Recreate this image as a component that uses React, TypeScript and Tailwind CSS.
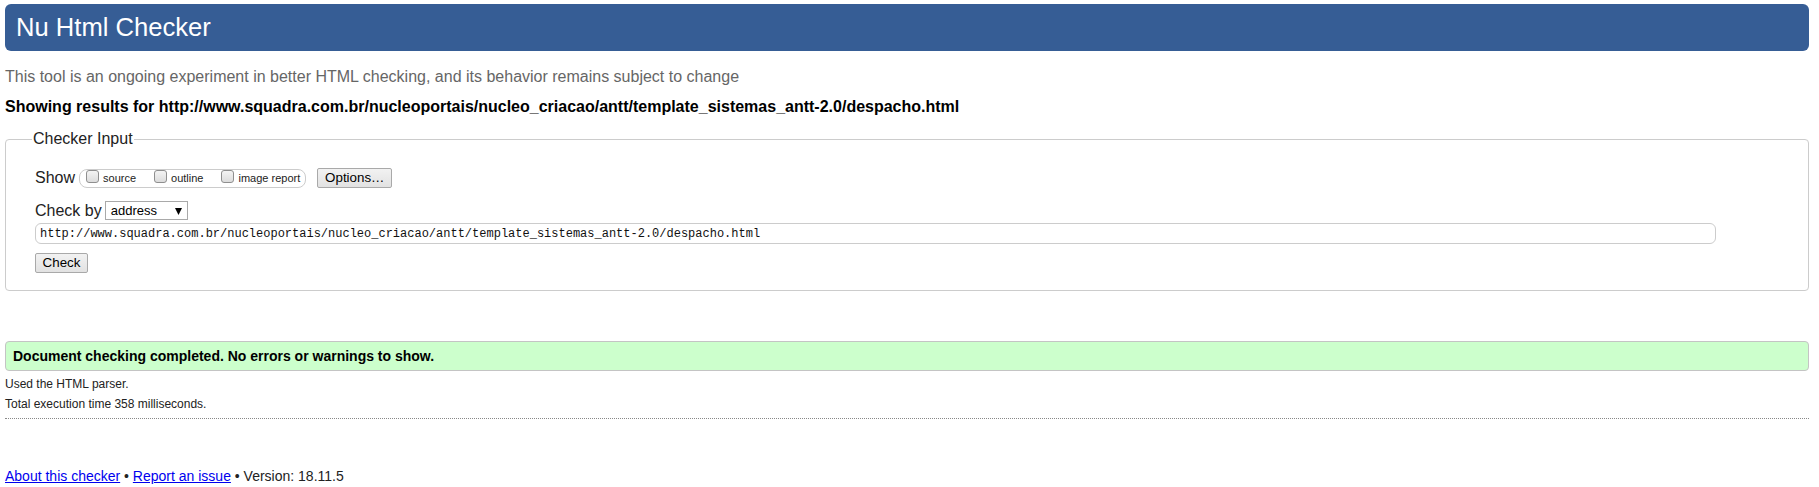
import React from "react";

function Box() {
  return (
    <span className="inline-block w-[13px] h-[13px] rounded-[3px] border border-[#8f8f8f] bg-gradient-to-b from-[#f4f4f4] to-[#dcdcdc] mr-[4px] -translate-y-[2px]" />
  );
}

export default function App() {
  return (
    <div className="pl-[5px] pr-[10px] pt-[4px] pb-[4px] font-['Liberation_Sans',Arial,sans-serif] text-[#222] bg-white min-h-[487px]">
      <h1 className="h-[47px] bg-[#365d95] rounded-[6px] text-white text-[25.6px] leading-none pl-[11px] flex items-center">
        Nu Html Checker
      </h1>
      <p className="mt-[17px] text-[16px] leading-[18px] text-[#666]">
        This tool is an ongoing experiment in better HTML checking, and its behavior remains subject to change
      </p>
      <p className="mt-[12px] text-[16px] leading-[18px] font-bold text-black">
        Showing results for http://www.squadra.com.br/nucleoportais/nucleo_criacao/antt/template_sistemas_antt-2.0/despacho.html
      </p>
      <fieldset className="mt-[14px] border border-[#ccc] rounded-[4px] pl-[29px] pr-[10px] pt-[20px] pb-[17px]">
        <legend className="text-[16px] leading-[18px] px-[1px] -ml-[3px]">Checker Input</legend>
        <div className="flex items-center h-[20px]">
          <span className="text-[16px] leading-[18px] mr-[4px]">Show</span>
          <div className="flex items-center h-[19px] border border-[#ccc] rounded-[8px] pl-[6px] pr-[5px] text-[11px] leading-[13px]">
            <Box />
            <span>source</span>
            <span className="w-[18px]" />
            <Box />
            <span>outline</span>
            <span className="w-[18px]" />
            <Box />
            <span>image report</span>
          </div>
          <button className="ml-[11px] w-[75px] h-[20px] border border-[#a9a9a9] rounded-[2px] bg-gradient-to-b from-[#f2f2f2] to-[#e2e2e2] text-[13.33px] leading-[16px] text-black flex items-center justify-center">
            Options…
          </button>
        </div>
        <div className="flex items-center mt-[13px] h-[19px]">
          <span className="text-[16px] leading-[18px] mr-[3px]">Check by</span>
          <div className="relative w-[83px] h-[19px] border border-[#a9a9a9] bg-white text-[13px] leading-[17px] text-black pl-[5px]">
            address
            <svg className="absolute right-[5px] top-[6px]" width="7" height="7" viewBox="0 0 7 7">
              <path d="M0 0 H7 L3.5 7 Z" fill="#000" />
            </svg>
          </div>
        </div>
        <div className="mt-[3px] w-[1681px] h-[21px] border border-[#ccc] rounded-[6px] pl-[4px] flex items-center font-['Liberation_Mono',monospace] text-[12px] text-[#111]">
          http://www.squadra.com.br/nucleoportais/nucleo_criacao/antt/template_sistemas_antt-2.0/despacho.html
        </div>
        <button className="mt-[9px] w-[53px] h-[20px] border border-[#a9a9a9] rounded-[2px] bg-gradient-to-b from-[#f2f2f2] to-[#e2e2e2] text-[13.33px] leading-[16px] text-black flex items-center justify-center">
          Check
        </button>
      </fieldset>
      <div className="mt-[50px] border border-[#c4c4c4] rounded-[4px] bg-[#ccffcc] px-[7px] py-[6px] text-[14px] leading-[16px] font-bold text-black">
        Document checking completed. No errors or warnings to show.
      </div>
      <p className="mt-[6px] text-[12px] leading-[14px]">Used the HTML parser.</p>
      <p className="mt-[6px] text-[12px] leading-[14px]">Total execution time 358 milliseconds.</p>
      <div className="mt-[7px] border-t border-dotted border-[#888]" />
      <p className="mt-[49px] text-[14px] leading-[16px]">
        <a href="#" className="text-[#0000ee] underline">About this checker</a>
        {" • "}
        <a href="#" className="text-[#0000ee] underline">Report an issue</a>
        {" • Version: 18.11.5"}
      </p>
    </div>
  );
}
